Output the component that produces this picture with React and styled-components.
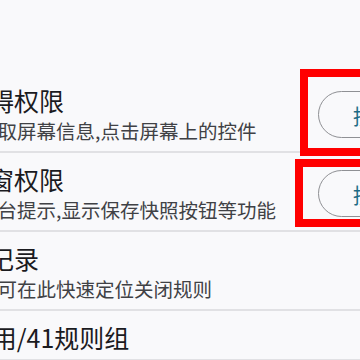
import React from 'react';
import styled, { createGlobalStyle } from 'styled-components';

const GlobalStyle = createGlobalStyle`
  html, body {
    margin: 0;
    padding: 0;
    overflow: hidden;
    background: #f9f9fb;
  }
  body {
    font-family: "Noto Sans CJK SC", "Noto Sans", sans-serif;
  }
`;

const Page = styled.div`
  width: 500px;
  margin-left: -61px;
  padding-top: 74px;
`;

const Row = styled.div`
  display: flex;
  align-items: center;
  padding: 11px 9px 7px 0;
  border-bottom: 2px solid #e1e1e4;
`;

const Texts = styled.div`
  flex: 1;
  display: flex;
  flex-direction: column;
  gap: 3px;
`;

const Title = styled.div`
  font-size: 25px;
  line-height: 30px;
  color: #1b1b1f;
  white-space: nowrap;
`;

const Desc = styled.div`
  font-size: 19.5px;
  line-height: 26px;
  color: #404145;
  white-space: nowrap;
`;

const ButtonWrap = styled.div`
  position: relative;
  flex: 0 0 auto;
`;

const Button = styled.button`
  height: 47px;
  padding: 0 34px 0 34px;
  border: 1.5px solid #8f9094;
  border-radius: 24px;
  background: transparent;
  color: #1d6b85;
  font-family: inherit;
  font-size: 21px;
  white-space: nowrap;
`;

const Mark = styled.div`
  position: absolute;
  left: ${({ $left }) => $left}px;
  top: ${({ $top }) => $top}px;
  bottom: ${({ $bottom }) => $bottom}px;
  right: -30px;
  border: 8px solid #ff0000;
  pointer-events: none;
`;

const items = [
  {
    title: '无障碍权限',
    desc: '用于获取屏幕信息,点击屏幕上的控件',
    mark: { left: -18, top: -22, bottom: -18 },
  },
  {
    title: '悬浮窗权限',
    desc: '用于后台提示,显示保存快照按钮等功能',
    mark: { left: -23, top: -11, bottom: -10 },
  },
  { title: '触发记录', desc: '如误触可在此快速定位关闭规则' },
  { title: '40启用/41规则组' },
];

export default function App() {
  return (
    <Page>
      <GlobalStyle />
      {items.map((it) => (
        <Row key={it.title}>
          <Texts>
            <Title>{it.title}</Title>
            {it.desc && <Desc>{it.desc}</Desc>}
          </Texts>
          {it.mark && (
            <ButtonWrap>
              <Button>授权</Button>
              <Mark $left={it.mark.left} $top={it.mark.top} $bottom={it.mark.bottom} />
            </ButtonWrap>
          )}
        </Row>
      ))}
    </Page>
  );
}
